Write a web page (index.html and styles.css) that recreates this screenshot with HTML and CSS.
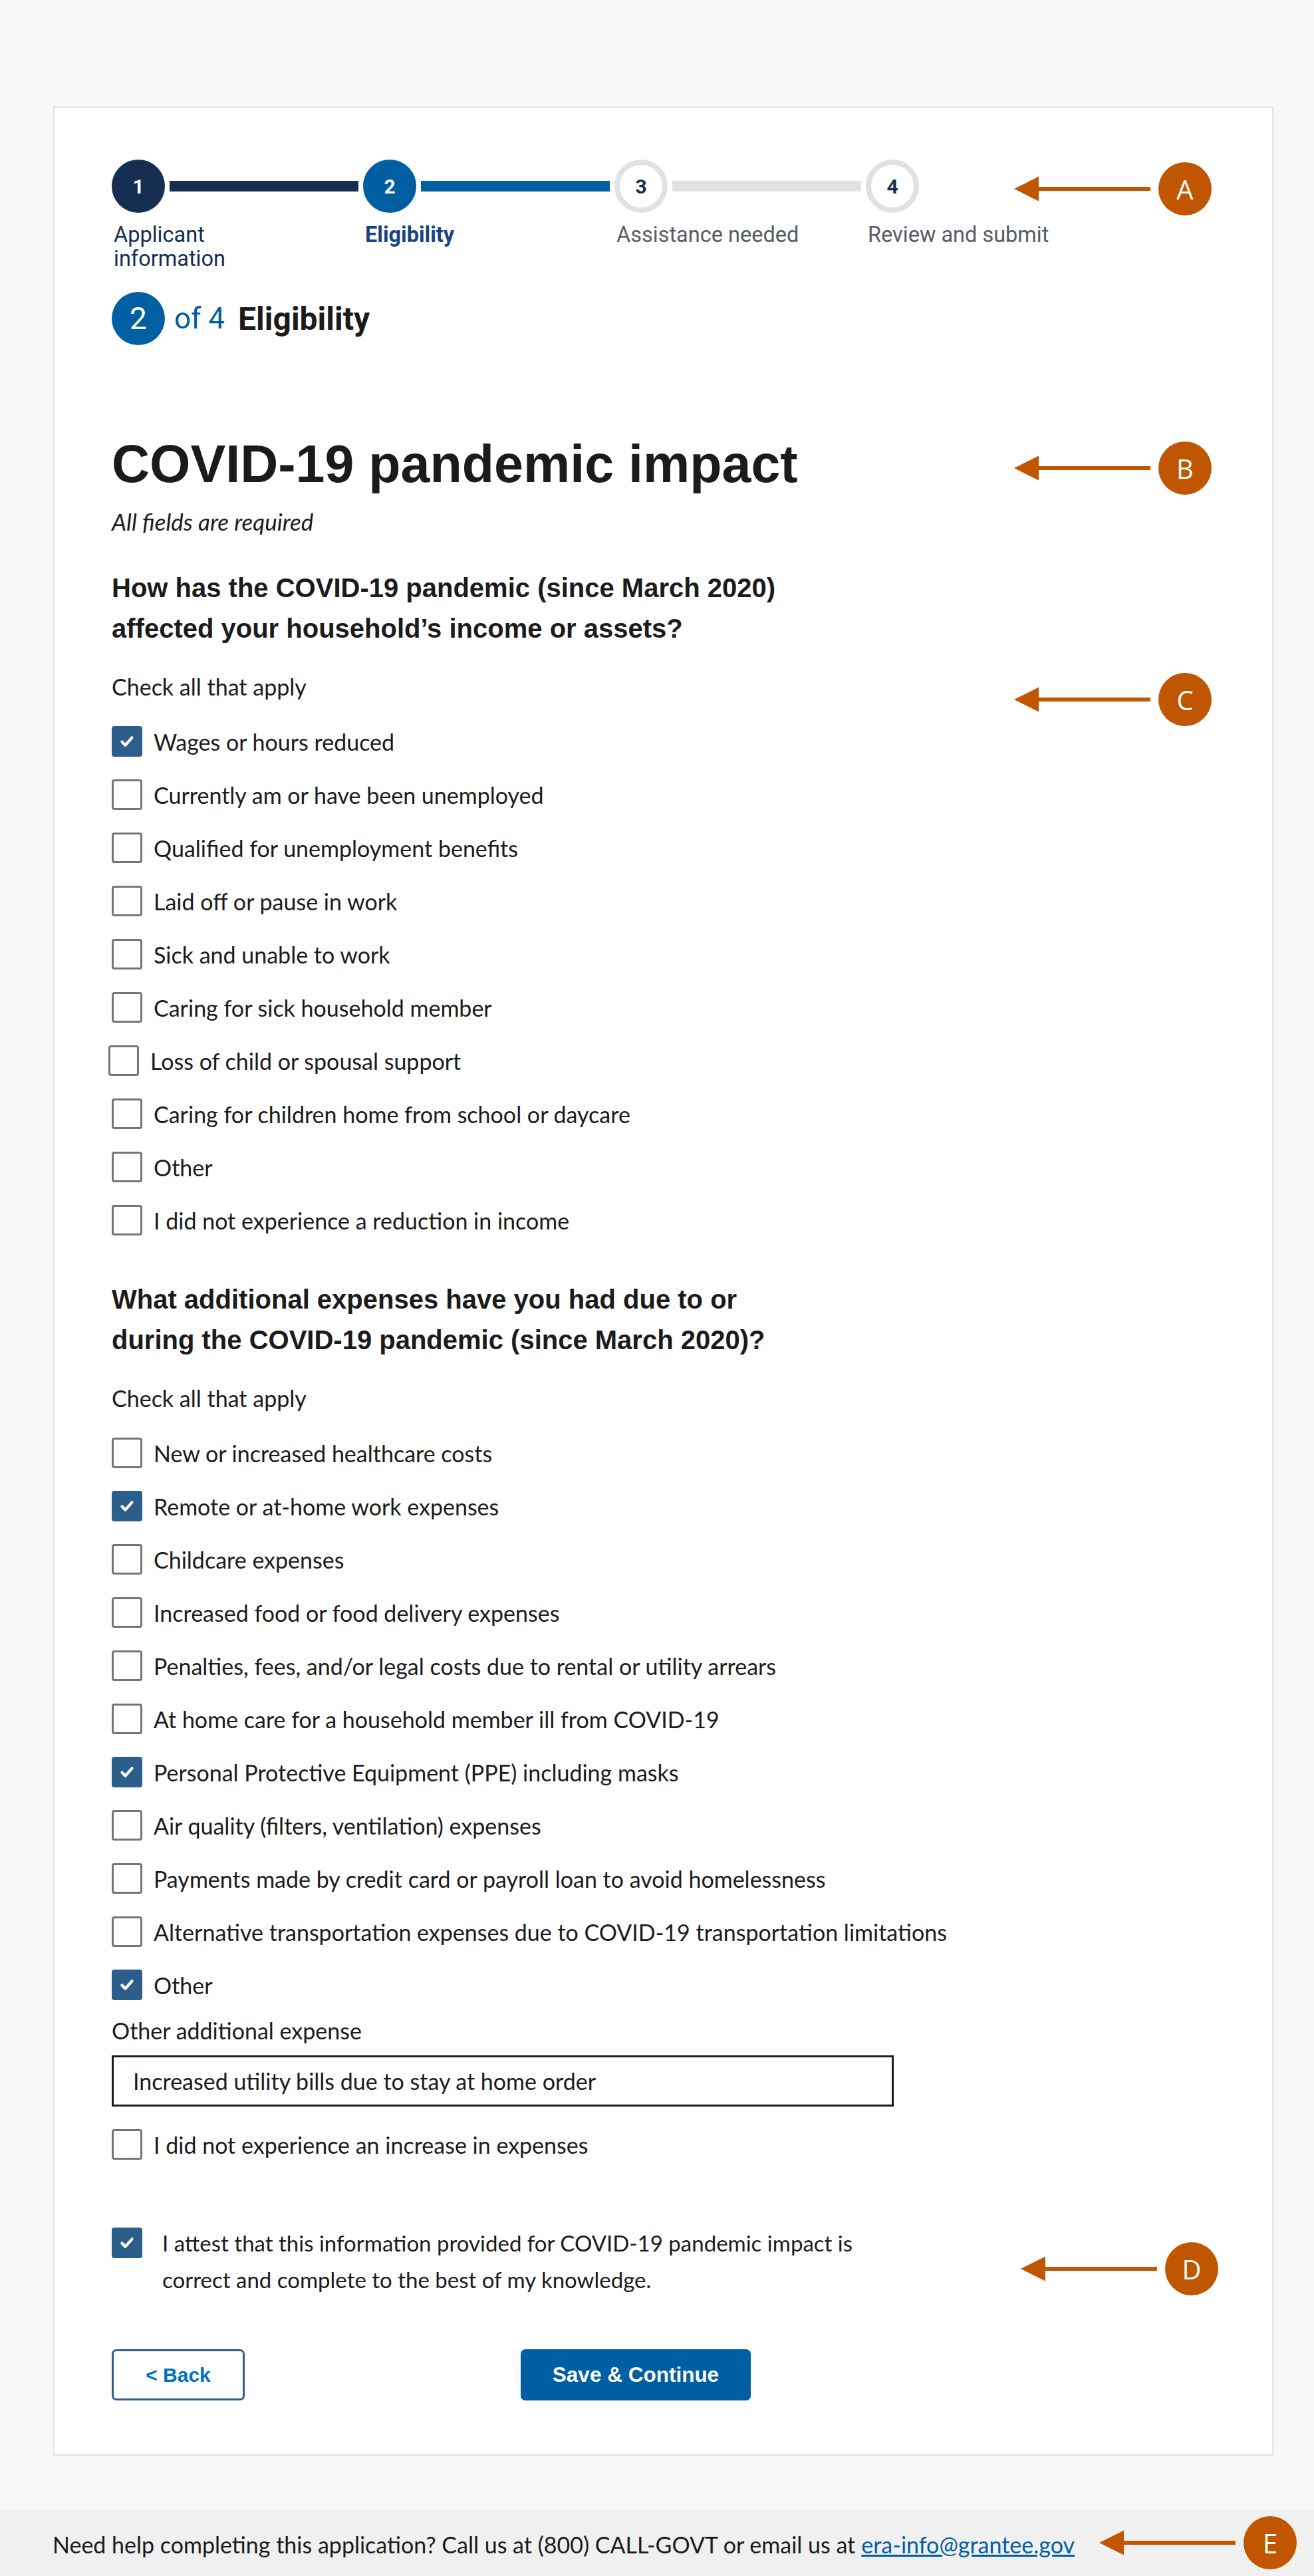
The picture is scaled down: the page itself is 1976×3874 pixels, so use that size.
FILE: index.html
```html
<!DOCTYPE html>
<html lang="en">
<head>
<meta charset="utf-8">
<title>COVID-19 pandemic impact</title>
<link rel="stylesheet" href="styles.css">
</head>
<body>
<div class="page">
  <main class="card">
    <ol class="steps">
      <li class="step complete">
        <div class="step-head"><span class="circle">1</span><span class="bar"></span></div>
        <span class="step-label">Applicant<br>information</span>
      </li>
      <li class="step current">
        <div class="step-head"><span class="circle">2</span><span class="bar"></span></div>
        <span class="step-label">Eligibility</span>
      </li>
      <li class="step">
        <div class="step-head"><span class="circle">3</span><span class="bar"></span></div>
        <span class="step-label">Assistance needed</span>
      </li>
      <li class="step last">
        <div class="step-head"><span class="circle">4</span></div>
        <span class="step-label">Review and submit</span>
      </li>
    </ol>

    <div class="counter">
      <span class="counter-num">2</span>
      <span class="counter-of">of 4</span>
      <span class="counter-title">Eligibility</span>
    </div>

    <h1 class="title">COVID-19 pandemic impact</h1>
    <p class="required">All fields are required</p>

    <section class="group">
      <h2 class="question">How has the COVID-19 pandemic (since March 2020)<br>affected your household’s income or assets?</h2>
      <p class="hint">Check all that apply</p>
      <label class="opt"><span class="box checked"><svg viewBox="0 0 24 24"><path d="M6 12.5l4 4 8-9" /></svg></span><span>Wages or hours reduced</span></label>
      <label class="opt"><span class="box"></span><span>Currently am or have been unemployed</span></label>
      <label class="opt"><span class="box"></span><span>Qualified for unemployment benefits</span></label>
      <label class="opt"><span class="box"></span><span>Laid off or pause in work</span></label>
      <label class="opt"><span class="box"></span><span>Sick and unable to work</span></label>
      <label class="opt"><span class="box"></span><span>Caring for sick household member</span></label>
      <label class="opt opt-shift"><span class="box"></span><span>Loss of child or spousal support</span></label>
      <label class="opt"><span class="box"></span><span>Caring for children home from school or daycare</span></label>
      <label class="opt"><span class="box"></span><span>Other</span></label>
      <label class="opt"><span class="box"></span><span>I did not experience a reduction in income</span></label>
    </section>

    <section class="group group-2">
      <h2 class="question">What additional expenses have you had due to or<br>during the COVID-19 pandemic (since March 2020)?</h2>
      <p class="hint">Check all that apply</p>
      <label class="opt"><span class="box"></span><span>New or increased healthcare costs</span></label>
      <label class="opt"><span class="box checked"><svg viewBox="0 0 24 24"><path d="M6 12.5l4 4 8-9" /></svg></span><span>Remote or at-home work expenses</span></label>
      <label class="opt"><span class="box"></span><span>Childcare expenses</span></label>
      <label class="opt"><span class="box"></span><span>Increased food or food delivery expenses</span></label>
      <label class="opt"><span class="box"></span><span>Penalties, fees, and/or legal costs due to rental or utility arrears</span></label>
      <label class="opt"><span class="box"></span><span>At home care for a household member ill from COVID-19</span></label>
      <label class="opt"><span class="box checked"><svg viewBox="0 0 24 24"><path d="M6 12.5l4 4 8-9" /></svg></span><span>Personal Protective Equipment (PPE) including masks</span></label>
      <label class="opt"><span class="box"></span><span>Air quality (filters, ventilation) expenses</span></label>
      <label class="opt"><span class="box"></span><span>Payments made by credit card or payroll loan to avoid homelessness</span></label>
      <label class="opt"><span class="box"></span><span>Alternative transportation expenses due to COVID-19 transportation limitations</span></label>
      <label class="opt"><span class="box checked"><svg viewBox="0 0 24 24"><path d="M6 12.5l4 4 8-9" /></svg></span><span>Other</span></label>
      <p class="field-label">Other additional expense</p>
      <div class="text-input">Increased utility bills due to stay at home order</div>
      <label class="opt"><span class="box"></span><span>I did not experience an increase in expenses</span></label>
    </section>

    <label class="attest"><span class="box checked"><svg viewBox="0 0 24 24"><path d="M6 12.5l4 4 8-9" /></svg></span><span class="attest-text">I attest that this information provided for COVID-19 pandemic impact is<br>correct and complete to the best of my knowledge.</span></label>

    <div class="actions">
      <button class="btn btn-back" type="button">&lt; Back</button>
      <button class="btn btn-save" type="button">Save &amp; Continue</button>
    </div>
  </main>
</div>

<footer class="help">Need help completing this application? Call us at (800) CALL-GOVT or email us at <a href="#">era-info@grantee.gov</a></footer>

<div class="note note-a"><svg class="arrow" viewBox="0 0 205 80"><polygon points="0,40 37,21.5 37,58.5"/><rect x="36" y="37" width="169" height="6"/></svg><span class="marker">A</span></div>
<div class="note note-b"><svg class="arrow" viewBox="0 0 205 80"><polygon points="0,40 37,21.5 37,58.5"/><rect x="36" y="37" width="169" height="6"/></svg><span class="marker">B</span></div>
<div class="note note-c"><svg class="arrow" viewBox="0 0 205 80"><polygon points="0,40 37,21.5 37,58.5"/><rect x="36" y="37" width="169" height="6"/></svg><span class="marker">C</span></div>
<div class="note note-d"><svg class="arrow" viewBox="0 0 205 80"><polygon points="0,40 37,21.5 37,58.5"/><rect x="36" y="37" width="169" height="6"/></svg><span class="marker">D</span></div>
<div class="note note-e"><svg class="arrow" viewBox="0 0 205 80"><polygon points="0,40 37,21.5 37,58.5"/><rect x="36" y="37" width="169" height="6"/></svg><span class="marker">E</span></div>
</body>
</html>
```

FILE: styles.css
```css
html, body {
  margin: 0;
  padding: 0;
}
body {
  position: relative;
  background: #f7f8fa;
  color: #1b1b1b;
  font-family: Lato, "Liberation Sans", sans-serif;
}
.page {
  padding: 160px 61px 82px 80px;
}
.card {
  background: #fff;
  border: 2px solid #e1e3e5;
  padding: 78px 86px 81px;
}

/* step indicator */
.steps {
  display: flex;
  list-style: none;
  margin: 0;
  padding: 0;
}
.step {
  width: 378px;
  display: flex;
  flex-direction: column;
  flex: none;
}
.step.last { width: auto; }
.step-head {
  display: flex;
  align-items: center;
  height: 80px;
}
.circle {
  width: 80px;
  height: 80px;
  flex: none;
  box-sizing: border-box;
  border-radius: 50%;
  display: flex;
  align-items: center;
  justify-content: center;
  font-family: Roboto, "Liberation Sans", sans-serif;
  font-weight: 700;
  font-size: 30px;
  background: #fff;
  border: 8px solid #dfe1e2;
  color: #162e51;
}
.bar {
  flex: 1;
  height: 16px;
  margin: 0 7px;
  background: #dfe1e2;
}
.complete .circle { background: #162e51; border-color: #162e51; color: #fff; }
.complete .bar { background: #162e51; }
.current .circle { background: #005ea2; border-color: #005ea2; color: #fff; }
.current .bar { background: #005ea2; }
.step-label {
  margin-top: 15px;
  padding-left: 3px;
  font-family: Roboto, "Liberation Sans", sans-serif;
  font-size: 32.5px;
  line-height: 36px;
  color: #565c65;
}
.complete .step-label { color: #162e51; }
.current .step-label { color: #1a4480; font-weight: 700; }

/* counter */
.counter {
  display: flex;
  align-items: center;
  margin-top: 32px;
  height: 80px;
  font-family: Roboto, "Liberation Sans", sans-serif;
  font-size: 44px;
}
.counter-num {
  width: 80px;
  height: 80px;
  border-radius: 50%;
  background: #005ea2;
  color: #fff;
  display: flex;
  align-items: center;
  justify-content: center;
  font-size: 46px;
}
.counter-of {
  color: #005ea2;
  margin-left: 14px;
}
.counter-title {
  font-weight: 700;
  font-size: 48px;
  margin-left: 20px;
}

/* headings */
.title {
  margin: 134px 0 0;
  font-family: "Liberation Sans", Arial, sans-serif;
  font-weight: 700;
  font-size: 79px;
  line-height: 90px;
  color: #1b1b1b;
}
.required {
  margin: 21px 0 0;
  font-style: italic;
  font-size: 35px;
  line-height: 40px;
}
.group {
  margin: 50px 0 0;
}
.group-2 {
  margin-top: 49px;
}
.question {
  margin: 0;
  font-family: "Liberation Sans", Arial, sans-serif;
  font-weight: 700;
  font-size: 40px;
  line-height: 61px;
}
.hint {
  margin: 37px 0 22px;
  font-size: 34px;
  line-height: 40px;
}

/* options */
.opt {
  display: flex;
  align-items: center;
  height: 80px;
  font-size: 34px;
}
.opt-shift {
  margin-left: -5px;
}
.box {
  width: 46px;
  height: 46px;
  box-sizing: border-box;
  border: 3px solid #71767a;
  border-radius: 4px;
  margin-right: 17px;
  flex: none;
  display: flex;
  align-items: center;
  justify-content: center;
  background: #fff;
}
.box.checked {
  background: #2c5e8c;
  border-color: #2c5e8c;
}
.box svg {
  width: 30px;
  height: 30px;
  fill: none;
  stroke: #fff;
  stroke-width: 3.4;
  stroke-linecap: round;
  stroke-linejoin: round;
}
.field-label {
  margin: 9px 0 17px;
  font-size: 34px;
  line-height: 40px;
}
.text-input {
  width: 1176px;
  height: 77px;
  box-sizing: border-box;
  border: 3px solid #1b1b1b;
  padding-left: 29px;
  display: flex;
  align-items: center;
  font-size: 34px;
  margin-bottom: 17px;
}

/* attest */
.attest {
  display: flex;
  align-items: flex-start;
  margin-top: 82px;
}
.attest .box {
  margin-top: 3px;
  margin-right: 30px;
}
.attest-text {
  font-size: 33px;
  line-height: 55px;
  margin-top: -1px;
}

/* actions */
.actions {
  display: flex;
  margin-top: 77px;
}
.btn {
  height: 77px;
  box-sizing: border-box;
  font-family: "Liberation Sans", Arial, sans-serif;
  font-weight: 700;
  font-size: 30px;
  border-radius: 7px;
  cursor: pointer;
}
.btn-back {
  width: 200px;
  background: #fff;
  border: 3px solid #2c5e8c;
  color: #0071bc;
}
.btn-save {
  width: 346px;
  margin-left: 415px;
  background: #005ea2;
  border: none;
  color: #fff;
  font-size: 31.5px;
}

/* footer */
.help {
  height: 102px;
  background: #f0f0f0;
  padding-left: 79px;
  display: flex;
  align-items: center;
  font-size: 34px;
  color: #1b1b1b;
}
.help a {
  color: #005ea2;
  margin-left: 9px;
}

/* annotations */
.note {
  position: absolute;
  display: flex;
  align-items: center;
  height: 80px;
}
.arrow {
  width: 205px;
  height: 80px;
  fill: #c05600;
}
.marker {
  width: 80px;
  height: 80px;
  margin-left: 12px;
  border-radius: 50%;
  background: #c05600;
  color: #fff;
  display: flex;
  align-items: center;
  justify-content: center;
  font-family: "Open Sans", sans-serif;
  font-size: 40px;
}
.note-a { left: 1525px; top: 244px; }
.note-b { left: 1525px; top: 664px; }
.note-c { left: 1525px; top: 1012px; }
.note-d { left: 1535px; top: 3372px; }
.note-e { left: 1653px; top: 3784px; }
```
